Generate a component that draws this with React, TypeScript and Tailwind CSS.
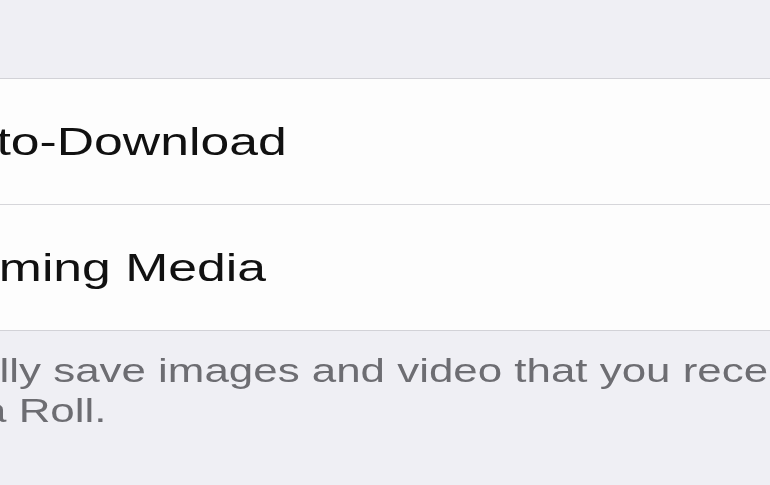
import React from "react";

const font = { fontFamily: '"Liberation Sans", Arial, sans-serif' };

export default function App() {
  return (
    <div className="w-[770px] h-[485px] overflow-hidden bg-[#efeff4]" style={font}>
      <div className="h-[78px]" />
      <div className="border-t border-b border-[#d2d2d7]">
        <div className="h-[125px] flex items-center bg-[#fdfdfd] overflow-hidden">
          <span className="block whitespace-nowrap text-[38px] leading-[46px] text-[#111111] origin-left scale-x-[1.36] blur-[0.4px] ml-[-219px]">
            Media Auto-Download
          </span>
        </div>
        <div className="h-px bg-[#d6d6da]" />
        <div className="h-[125px] flex items-center bg-[#fdfdfd] overflow-hidden">
          <span className="block whitespace-nowrap text-[38px] leading-[46px] text-[#111111] origin-left scale-x-[1.36] blur-[0.4px] ml-[-231px]">
            Save Incoming Media
          </span>
        </div>
      </div>
      <div className="pt-[20px] overflow-hidden text-[33px] leading-[40px] text-[#6d6d72]">
        <div className="whitespace-nowrap origin-left scale-x-[1.33] blur-[0.4px] ml-[-220px]">
          Automatically save images and video that you receive
        </div>
        <div className="whitespace-nowrap origin-left scale-x-[1.33] blur-[0.4px] ml-[-296px]">
          to your Camera Roll.
        </div>
      </div>
    </div>
  );
}
